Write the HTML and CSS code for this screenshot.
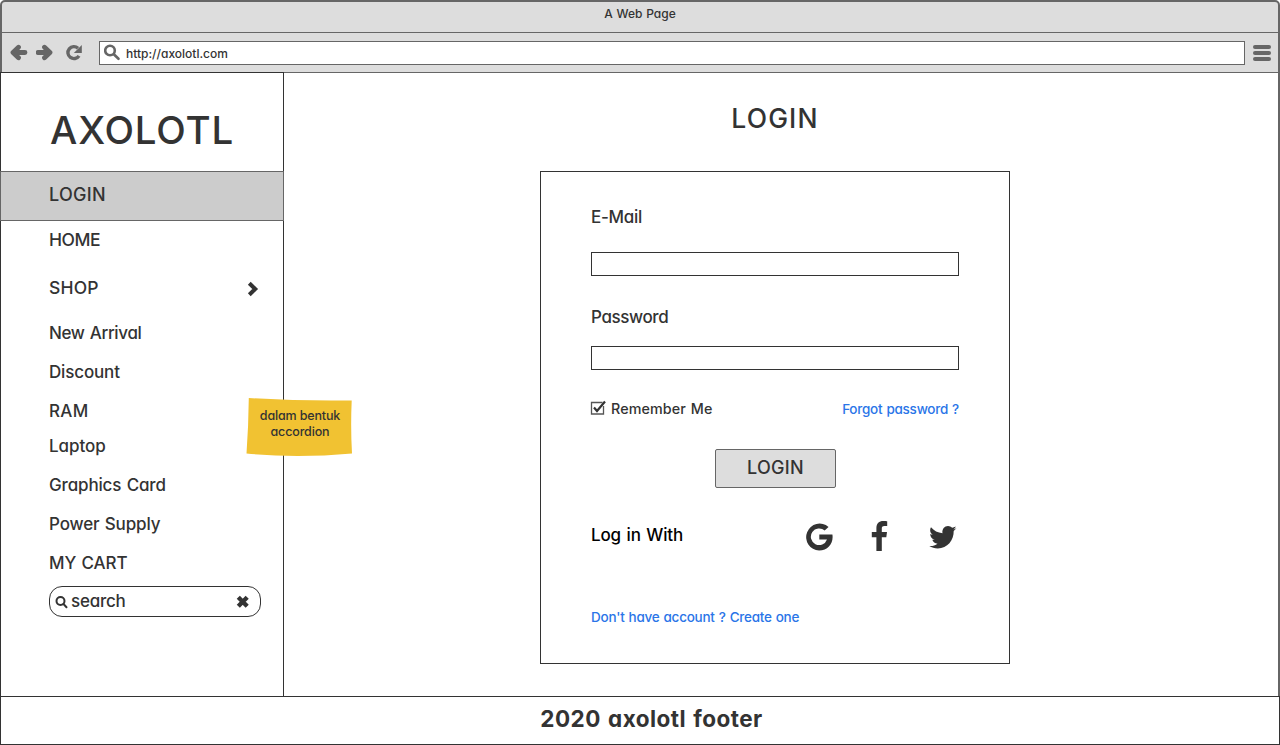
FILE: index.html
```html
<!DOCTYPE html>
<html lang="id">
<head>
<meta charset="utf-8">
<title>A Web Page</title>
<link rel="stylesheet" href="styles.css">
</head>
<body>
<div class="window">
  <header class="chrome">
    <div class="titlebar">A Web Page</div>
    <div class="toolbar">
      <svg class="tool back" width="18" height="18" viewBox="0 0 18 18"><path d="M8.500 3.200 3 8.500 8.500 13.800M4 8.500H15" /></svg>
      <svg class="tool forward" width="18" height="18" viewBox="0 0 18 18"><path d="M8.500 3.200 14 8.500 8.500 13.800M13 8.500H2" /></svg>
      <svg class="tool reload" width="18" height="18" viewBox="0 0 18 18"><path class="arc" d="M13 4.200A6 6 0 1 0 14 11.800"/><path class="tip" d="M16.800 1V9H8.800Z"/></svg>
      <div class="address">
        <svg class="lens" width="18" height="18" viewBox="0 0 18 18"><circle cx="6" cy="6.500" r="4.800"/><path d="M9.800 10.200 14.500 14.800"/></svg>
        <span>http://axolotl.com</span>
      </div>
      <div class="menu"><i></i><i></i><i></i></div>
    </div>
  </header>

  <div class="page">
    <aside class="sidebar">
      <h1 class="logo">AXOLOTL</h1>
      <nav class="nav">
        <a class="item active">LOGIN</a>
        <a class="item home">HOME</a>
        <a class="item shop"><span>SHOP</span>
          <svg width="12" height="16" viewBox="0 0 12 16"><path d="M2.300 2.200 8.200 8 2.300 13.800"/></svg>
        </a>
        <a class="item sub arrival">New Arrival</a>
        <a class="item sub">Discount</a>
        <a class="item sub ram">RAM</a>
        <a class="item sub laptop">Laptop</a>
        <a class="item sub">Graphics Card</a>
        <a class="item sub">Power Supply</a>
        <a class="item sub cart">MY CART</a>
      </nav>
      <div class="search">
        <svg width="14" height="14" viewBox="0 0 14 14"><circle cx="5.500" cy="6" r="4"/><path d="M8.500 9 11.500 12.200"/></svg>
        <span>search</span>
        <svg class="clear" width="14" height="14" viewBox="0 0 14 14"><path d="M2.300 2.300 11.200 11.200M11.200 2.300 2.300 11.200"/></svg>
      </div>
      <div class="note">
        <svg width="107" height="60" viewBox="0 0 107 60"><path d="M2.800 0Q55 3.200 105.700 2.400Q104.500 30 106 55.500Q50 60.500 .500 55.500Q2.500 28 2.800 0Z"/></svg>
        <p>dalam bentuk<br>accordion</p>
      </div>
    </aside>

    <main class="content">
      <h2 class="heading">LOGIN</h2>
      <form class="card">
        <label class="label email">E-Mail</label>
        <div class="field"></div>
        <label class="label password">Password</label>
        <div class="field second"></div>
        <div class="options">
          <svg width="17" height="16" viewBox="0 0 17 16"><path class="box" d="M12.500 2.500H1.500V14H13.500V6"/><path class="tick" d="M4 7.500 7 11 15 1.500"/></svg>
          <span>Remember Me</span>
          <a class="link forgot">Forgot password ?</a>
        </div>
        <div class="submit">LOGIN</div>
        <div class="social">
          <span>Log in With</span>
          <svg class="google" width="28" height="28" viewBox="0 0 28 28"><path d="M23.500 3.900 19.700 7.600A8.300 8.300 0 1 0 22 16.500H14.300V11.400H27.400C28.800 20 23.300 27.600 14.100 27.600A13.500 13.500 0 1 1 23.500 3.900Z"/></svg>
          <svg class="facebook" width="17" height="30" viewBox="0 0 17 30"><path d="M16.200.300V5H13.400C11.200 5 10.800 6.100 10.800 7.600V11H16L15.300 16.300H10.800V30H5.400V16.300H.800V11H5.400V7.100C5.400 2.600 8.100.100 12.200.100 14.100.100 15.700.200 16.200.300Z"/></svg>
          <svg class="twitter" width="28" height="24" viewBox="0 0 28 24"><path d="M27.500 3.100C26.700 4.300 25.800 5.200 24.700 6 25 15 18.400 23.500 8.800 23.500 5.600 23.500 2.700 22.600.300 21 3.300 21.300 6.100 20.500 8.500 18.700 6 18.600 4 17 3.300 14.800 4.100 14.900 4.900 14.900 5.700 14.700 3.100 14.200 1.200 11.900 1.200 9.100 2 9.500 2.800 9.800 3.700 9.800 1.300 8.200.400 5 2 2.300 4.800 5.700 8.900 8 13.500 8.200 12.700 4.200 15.600 1 19 1 20.600 1 22 1.700 23.100 2.800 24.400 2.500 25.600 2 26.700 1.400 26.300 2.700 25.400 3.800 24.200 4.500 25.400 4.300 26.500 4 27.500 3.100Z"/></svg>
        </div>
        <a class="link create">Don't have account ? Create one</a>
      </form>
    </main>
  </div>

  <footer class="footer">2020 axolotl footer</footer>
</div>
</body>
</html>
```
FILE: styles.css
```css
* { box-sizing: border-box; }

body {
  margin: 0;
  background: #fff;
  color: #333;
  font-family: Inter, "Liberation Sans", sans-serif;
  font-feature-settings: "cv11";
  font-weight: 450;
}

h1, h2, p { margin: 0; font-weight: inherit; }
svg { display: block; flex: none; fill: none; stroke: #333; }

.window {
  display: flex;
  flex-direction: column;
  width: 1280px;
  height: 745px;
}

/* Browser chrome */
.chrome {
  height: 73px;
  border: 2px solid #666;
  border-bottom: 1px solid #666;
  border-radius: 5px 5px 0 0;
  background: #ddd;
}

.titlebar {
  height: 31px;
  border-bottom: 1px solid #666;
  text-align: center;
  font-size: 12px;
  line-height: 23px;
  letter-spacing: 0;
  word-spacing: .6px;
}

.toolbar {
  display: flex;
  align-items: center;
  height: 39px;
  padding: 0 7px 0 8px;
}

.tool { stroke: #666; stroke-width: 4.8; stroke-linecap: round; stroke-linejoin: round; }
.forward { margin-left: 8px; }
.reload { margin-left: 11px; stroke-width: 3.4; }
.reload .arc { stroke-linecap: butt; }
.reload .tip { fill: #666; stroke: none; }

.address {
  display: flex;
  align-items: center;
  flex: 1;
  height: 24px;
  margin-left: 16px;
  padding-left: 4px;
  border: 1px solid #666;
  background: #fff;
  font-size: 12px;
}
.address span { margin: 1px 0 0 4px; }
.lens { stroke: #666; stroke-width: 2.600; stroke-linecap: round; }

.menu { display: grid; gap: 2px; margin-left: 8px; }
.menu i { width: 18px; height: 4px; border-radius: 2px; background: #666; }

/* Page body */
.page {
  display: flex;
  height: 623px;
  border-right: 2px solid #666;
}

.sidebar {
  position: relative;
  width: 284px;
  margin-top: -1px;
  border: 1px solid #333;
  border-bottom: 0;
}

.logo {
  height: 98px;
  padding-left: 49px;
  font-size: 38.500px;
  line-height: 115px;
  letter-spacing: .850px;
}

.nav { display: flex; flex-direction: column; }
.item {
  padding-left: 48px;
  font-size: 17px;
  line-height: 24px;
  letter-spacing: -.15px;
  word-spacing: 1px;
}
.active {
  height: 50px;
  margin: 0 -1px;
  border: 1px solid #666;
  background: #ccc;
  font-size: 18px;
  line-height: 46px;
  letter-spacing: .3px;
}
.home { margin-top: 7px; font-size: 17.500px; letter-spacing: -.5px; }
.shop {
  display: flex;
  align-items: center;
  justify-content: space-between;
  margin-top: 24px;
  padding-right: 24px;
  font-size: 17.500px;
  letter-spacing: .2px;
}
.shop svg { stroke-width: 4; margin-top: 1px; }
.sub { margin-top: 15px; }
.arrival { margin-top: 21px; letter-spacing: -.35px; }
.ram { letter-spacing: .3px; }
.laptop { margin-top: 11px; letter-spacing: -.05px; }
.cart { letter-spacing: -.1px; }

.search {
  display: flex;
  align-items: center;
  width: 212px;
  height: 31px;
  margin: 11px 0 0 48px;
  padding: 0 10px 0 5px;
  border: 1px solid #333;
  border-radius: 13px;
  font-size: 17px;
  letter-spacing: -.25px;
}
.search svg { stroke-width: 2; stroke-linecap: round; }
.search span { margin: -2px 0 0 2px; }
.search .clear { margin-left: auto; stroke-width: 4.4; stroke-linecap: butt; }

.note {
  position: absolute;
  left: 245px;
  top: 325px;
  width: 107px;
  height: 60px;
}
.note svg { fill: #f1c232; stroke: none; }
.note p {
  position: absolute;
  inset: 10px 0 0 1px;
  text-align: center;
  font-size: 12.500px;
  line-height: 16px;
  letter-spacing: -.15px;
}

/* Login content */
.content { padding-left: 256px; }
.heading {
  height: 98px;
  text-align: center;
  font-size: 26.500px;
  line-height: 90px;
  letter-spacing: 1.150px;
}
.card {
  display: flex;
  flex-direction: column;
  width: 470px;
  height: 493px;
  padding: 0 50px;
  border: 1px solid #333;
}
.label { font-size: 17px; line-height: 24px; }
.email { margin-top: 33px; letter-spacing: -.3px; }
.password { margin-top: 29px; letter-spacing: -.4px; }
.field { height: 24px; margin-top: 23px; border: 1px solid #333; }
.second { margin-top: 17px; }

.options {
  display: flex;
  align-items: center;
  height: 24px;
  margin-top: 27px;
  font-size: 14.300px;
  letter-spacing: .1px;
  word-spacing: 1px;
}
.options span { margin: -2px 0 0 4px; }
.options svg { margin: -2px 0 0 -1px; }
.box { stroke: #555; stroke-width: 1.300; }
.tick { stroke-width: 2.200; }
.link { color: #2a75e8; font-size: 13.500px; letter-spacing: -.25px; word-spacing: .7px; line-height: 24px; }
.forgot { margin-left: auto; }

.submit {
  align-self: center;
  width: 121px;
  height: 39px;
  margin-top: 28px;
  border: 1px solid #666;
  border-radius: 2px;
  background: #ddd;
  text-align: center;
  font-size: 18px;
  line-height: 36px;
  letter-spacing: .3px;
  text-indent: 1px;
}

.social {
  display: flex;
  align-items: center;
  height: 30px;
  margin-top: 33px;
  color: #000;
  font-size: 17px;
  letter-spacing: -.15px;
  word-spacing: 1.200px;
}
.social span { margin-top: -2px; }
.social svg { fill: #333; stroke: none; }
.social .google { margin: 1px 0 0 auto; }
.facebook { margin-left: 38px; }
.twitter { margin: 1px 2px 0 41px; }
.create { margin-top: 54px; }

.footer {
  height: 49px;
  border: 1px solid #333;
  text-align: center;
  font-size: 22.500px;
  font-weight: 700;
  line-height: 44px;
  letter-spacing: .45px;
  word-spacing: 1.500px;
  text-indent: 23px;
}
```
